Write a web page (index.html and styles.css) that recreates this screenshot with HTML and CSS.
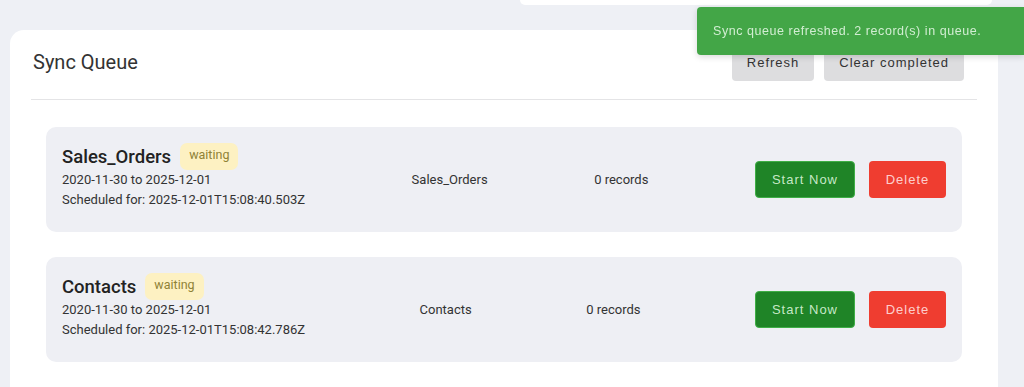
FILE: index.html
```html
<!DOCTYPE html>
<html>

<head>
    <title>Sync Queue</title>
    <link rel="stylesheet" href="styles.css">
</head>

<body>
    <div class="top-strip">
        <div class="prev-card"></div>
    </div>

    <div class="card">
        <div class="card-header">
            <h2 class="card-title">Sync Queue</h2>
            <div class="header-actions">
                <button class="btn btn-gray">Refresh</button>
                <button class="btn btn-gray">Clear completed</button>
            </div>
        </div>

        <div class="queue-list">
            <div class="queue-item">
                <div class="item-info">
                    <div class="item-name">
                        <span>Sales_Orders</span>
                        <span class="badge">waiting</span>
                    </div>
                    <div class="item-line">2020-11-30 to 2025-12-01</div>
                    <div class="item-line">Scheduled for: 2025-12-01T15:08:40.503Z</div>
                </div>
                <div class="item-col">Sales_Orders</div>
                <div class="item-col">0 records</div>
                <div class="item-actions">
                    <button class="btn btn-green">Start Now</button>
                    <button class="btn btn-red">Delete</button>
                </div>
            </div>

            <div class="queue-item">
                <div class="item-info">
                    <div class="item-name">
                        <span>Contacts</span>
                        <span class="badge">waiting</span>
                    </div>
                    <div class="item-line">2020-11-30 to 2025-12-01</div>
                    <div class="item-line">Scheduled for: 2025-12-01T15:08:42.786Z</div>
                </div>
                <div class="item-col">Contacts</div>
                <div class="item-col">0 records</div>
                <div class="item-actions">
                    <button class="btn btn-green">Start Now</button>
                    <button class="btn btn-red">Delete</button>
                </div>
            </div>
        </div>
    </div>

    <div class="toast">Sync queue refreshed. 2 record(s) in queue.</div>
</body>

</html>
```

FILE: styles.css
```css
html,
body {
    height: 100%;
    overflow: hidden;
}

body {
    margin: 0;
    background: #eef0f5;
    font-family: Roboto, "Liberation Sans", sans-serif;
    color: #333;
}

.top-strip {
    display: flex;
    justify-content: flex-end;
    padding-right: 32px;
}

.prev-card {
    width: 472px;
    height: 5px;
    background: #fff;
    border-radius: 0 0 12px 12px;
}

.card {
    margin: 25px 26px 0 10px;
    padding: 13px 21px 60px;
    background: #fff;
    border-radius: 14px;
}

.card-header {
    display: flex;
    justify-content: space-between;
    align-items: center;
    padding: 0 13px 18px 2px;
    border-bottom: 1px solid #e4e4e6;
}

.card-title {
    margin: 0;
    font-size: 20px;
    font-weight: 400;
    color: #333;
}

.header-actions {
    display: flex;
    gap: 10px;
}

.btn {
    border: none;
    border-radius: 4px;
    font-family: "Liberation Sans", Arial, sans-serif;
    font-size: 13px;
    letter-spacing: 1px;
    cursor: pointer;
    outline: none;
}

.btn-gray {
    height: 38px;
    padding: 0 15px;
    background: #dddddf;
    color: #333;
}

.btn-green {
    width: 100px;
    height: 37px;
    background: #1f8427;
    border: 1px solid #3fae46;
    color: rgba(220, 245, 220, 0.9);
}

.btn-red {
    width: 77px;
    height: 37px;
    background: #ef3d30;
    color: rgba(255, 225, 225, 0.9);
}

.queue-list {
    display: flex;
    flex-direction: column;
    gap: 25px;
    margin: 27px 15px 0;
}

.queue-item {
    display: flex;
    justify-content: space-between;
    align-items: center;
    height: 105px;
    padding: 0 16px;
    background: #eeeff4;
    border-radius: 10px;
}

.item-info {
    margin-bottom: 7px;
}

.item-name {
    display: flex;
    align-items: center;
    gap: 9px;
    height: 27px;
    font-size: 18.5px;
    font-weight: 500;
    color: #222;
}

.badge {
    padding: 0 9px;
    height: 27px;
    line-height: 24px;
    background: #fdf1c2;
    border-radius: 7px;
    font-size: 12.5px;
    font-weight: 400;
    color: #8f8236;
}

.item-line {
    font-size: 13px;
    line-height: 19.5px;
    color: #333;
}

.item-col {
    font-size: 13px;
    color: #333;
}

.item-actions {
    display: flex;
    gap: 14px;
}

.toast {
    position: fixed;
    top: 7px;
    right: 0;
    width: 286px;
    height: 48px;
    padding: 0 25px 0 16px;
    line-height: 48px;
    background: #43a647;
    border-radius: 4px 0 0 4px;
    box-shadow: 0 2px 6px rgba(0, 0, 0, 0.15);
    font-family: "Liberation Sans", Arial, sans-serif;
    font-size: 12.5px;
    letter-spacing: 0.55px;
    color: rgba(225, 245, 225, 0.9);
}
```
